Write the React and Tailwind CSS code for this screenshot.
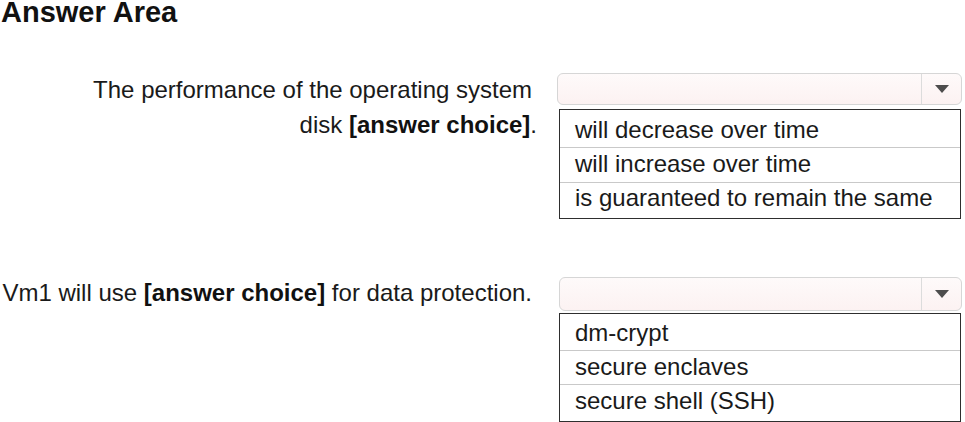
import React from "react";

function Dropdown({ className }) {
  return (
    <div
      className={
        "flex items-stretch rounded-[6px] border border-[#d6d6d6] bg-gradient-to-b from-[#fefafa] to-[#fcf2f2] " +
        className
      }
    >
      <div className="flex-1" />
      <div className="w-[40px] border-l border-[#dcdcdc] flex items-center justify-center">
        <svg width="14" height="8" viewBox="0 0 14 8">
          <polygon points="0,0 14,0 7,8" fill="#4d4d4d" />
        </svg>
      </div>
    </div>
  );
}

function ListBox({ items, rowClasses, className }) {
  return (
    <div className={"border border-[#2e2e2e] bg-white " + className}>
      {items.map((t, i) => (
        <div
          key={t}
          className={
            rowClasses[i] +
            " pl-[15px] text-[24px] whitespace-nowrap " +
            (i > 0 ? "border-t border-[#c9c9c9]" : "")
          }
        >
          {t}
        </div>
      ))}
    </div>
  );
}

export default function App() {
  return (
    <div className="w-[965px] h-[422px] overflow-hidden bg-white text-[#1a1a1a] font-['Liberation_Sans',Arial,sans-serif]">
      <div className="text-[29px] font-bold leading-[25px] pl-[1px] text-[#111]">
        Answer Area
      </div>

      <div className="flex mt-[47px]">
        <div className="w-[537px] text-right text-[24px] leading-[35px]">
          <div className="pr-[5px]">The performance of the operating system</div>
          <div>
            disk <span className="font-bold text-[#111]">[answer choice]</span>.
          </div>
        </div>
        <div className="ml-[20px] w-[405px] flex flex-col">
          <Dropdown className="mt-[1px] h-[32px]" />
          <ListBox
            className="mt-[4px] ml-[2px] w-[402px]"
            items={[
              "will decrease over time",
              "will increase over time",
              "is guaranteed to remain the same",
            ]}
            rowClasses={[
              "h-[37px] leading-[40px]",
              "h-[35px] leading-[31px]",
              "h-[36px] leading-[29px]",
            ]}
          />
        </div>
      </div>

      <div className="flex mt-[58px]">
        <div className="w-[537px] text-right text-[24px] leading-[32px] pr-[5px]">
          Vm1 will use <span className="font-bold text-[#111]">[answer choice]</span> for
          data protection.
        </div>
        <div className="ml-[22px] w-[403px] flex flex-col">
          <Dropdown className="h-[34px]" />
          <ListBox
            className="mt-[2px] w-[402px]"
            items={["dm-crypt", "secure enclaves", "secure shell (SSH)"]}
            rowClasses={[
              "h-[36px] leading-[37px]",
              "h-[34px] leading-[32px]",
              "h-[37px] leading-[31px]",
            ]}
          />
        </div>
      </div>
    </div>
  );
}
